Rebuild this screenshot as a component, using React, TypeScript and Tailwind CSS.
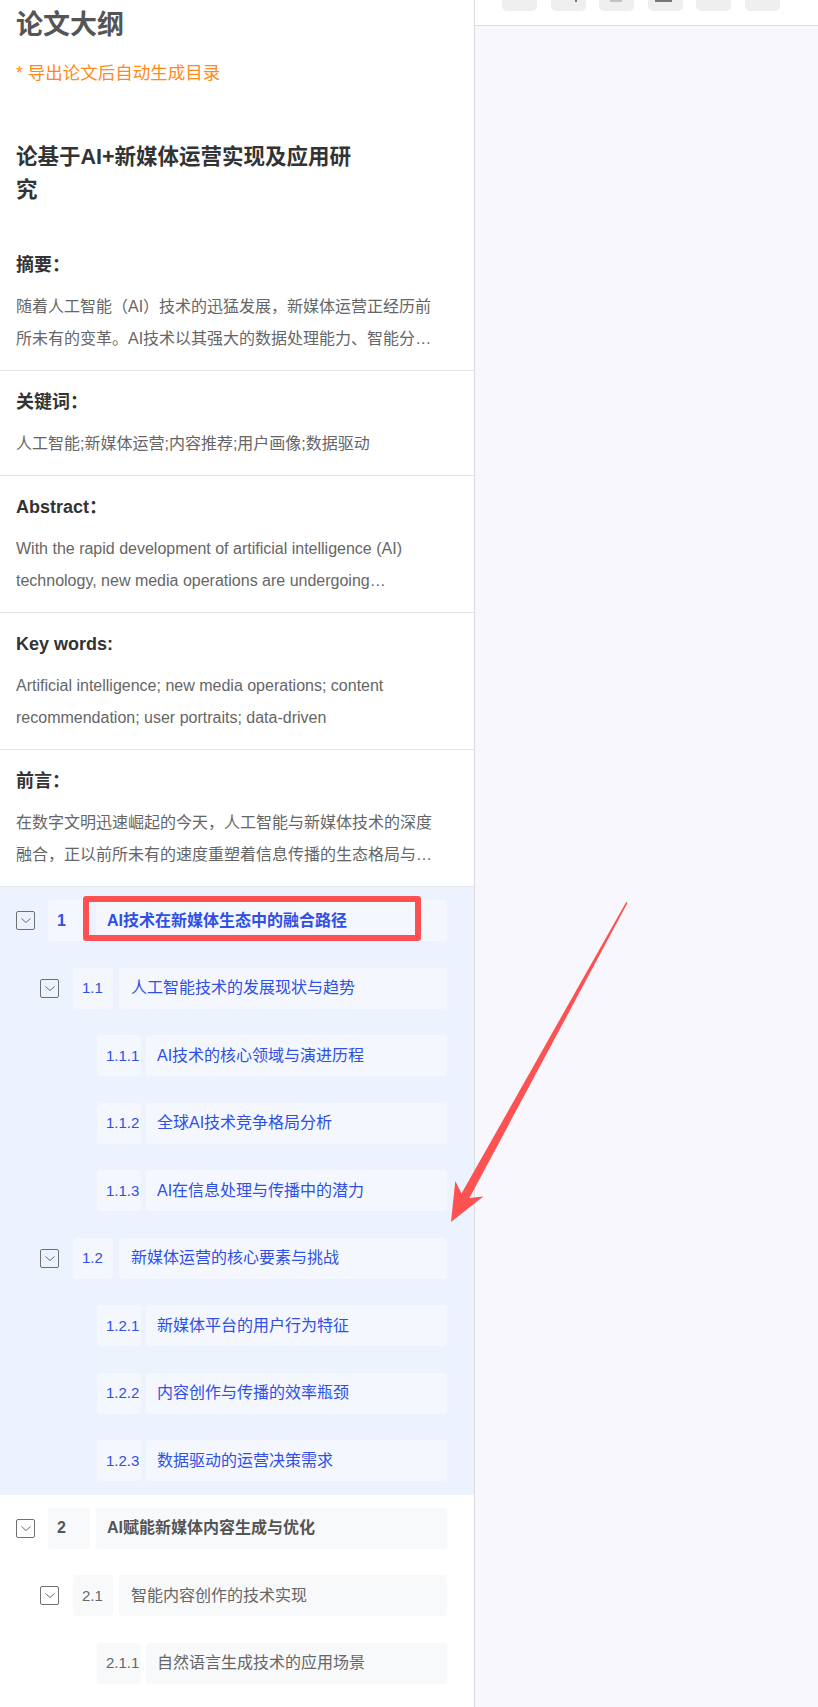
import React from 'react';

type OutlineItem = { num: string; title: string; level: 1 | 2 | 3 };

const sections = [
    {
        title: '摘要：',
        body: '随着人工智能（AI）技术的迅猛发展，新媒体运营正经历前所未有的变革。AI技术以其强大的数据处理能力、智能分析与精准推荐等优势，正在深刻重塑内容生产、传播与用户互动方式。',
        lines: 2,
    },
    {
        title: '关键词：',
        body: '人工智能;新媒体运营;内容推荐;用户画像;数据驱动',
        lines: 1,
    },
    {
        title: 'Abstract：',
        body: 'With the rapid development of artificial intelligence (AI) technology, new media operations are undergoing unprecedented changes. With its powerful data processing capabilities, AI is reshaping content production.',
        lines: 2,
    },
    {
        title: 'Key words:',
        body: 'Artificial intelligence; new media operations; content recommendation; user portraits; data-driven',
        lines: 2,
    },
    {
        title: '前言：',
        body: '在数字文明迅速崛起的今天，人工智能与新媒体技术的深度融合，正以前所未有的速度重塑着信息传播的生态格局与商业模式。',
        lines: 2,
    },
];

const chapterOne: OutlineItem[] = [
    { num: '1', title: 'AI技术在新媒体生态中的融合路径', level: 1 },
    { num: '1.1', title: '人工智能技术的发展现状与趋势', level: 2 },
    { num: '1.1.1', title: 'AI技术的核心领域与演进历程', level: 3 },
    { num: '1.1.2', title: '全球AI技术竞争格局分析', level: 3 },
    { num: '1.1.3', title: 'AI在信息处理与传播中的潜力', level: 3 },
    { num: '1.2', title: '新媒体运营的核心要素与挑战', level: 2 },
    { num: '1.2.1', title: '新媒体平台的用户行为特征', level: 3 },
    { num: '1.2.2', title: '内容创作与传播的效率瓶颈', level: 3 },
    { num: '1.2.3', title: '数据驱动的运营决策需求', level: 3 },
];

const chapterTwo: OutlineItem[] = [
    { num: '2', title: 'AI赋能新媒体内容生成与优化', level: 1 },
    { num: '2.1', title: '智能内容创作的技术实现', level: 2 },
    { num: '2.1.1', title: '自然语言生成技术的应用场景', level: 3 },
    { num: '2.1.2', title: 'AI辅助图像与视频内容生产', level: 3 },
];

function Chevron() {
    return (
        <span className="flex h-[19px] w-[19px] shrink-0 items-center justify-center rounded-[2px] border border-[#707070]">
            <svg width="10" height="5" viewBox="0 0 10 5">
                <path d="M0.5 0.5 L5 4.5 L9.5 0.5" fill="none" stroke="#6b6b6b" strokeWidth="1" />
            </svg>
        </span>
    );
}

function Row({ item, active }: { item: OutlineItem; active: boolean }) {
    const pad = item.level === 1 ? 'pl-[16px] gap-[13px]' : item.level === 2 ? 'pl-[40px] gap-[14px]' : 'pl-[64px] gap-[14px]';
    const numW = item.level === 1 ? 'w-[42px]' : item.level === 2 ? 'w-[40px]' : 'w-[44px]';
    const boxBg = active ? 'bg-[#f4f7fe]' : 'bg-[#f8f9fa]';
    const color = active ? 'text-[#2f4fe6]' : item.level === 1 ? 'text-[#555]' : 'text-[#666]';
    const bold = item.level === 1 ? 'font-bold' : '';

    return (
        <div className="py-[13.25px] pr-[27px]">
            <div className={`flex h-[41px] items-center ${pad}`}>
                {item.level === 3 ? <span className="w-[19px] shrink-0" /> : <Chevron />}
                <div className="flex h-full flex-1">
                    <span className={`flex h-full ${numW} shrink-0 items-center rounded-[4px] ${boxBg} pl-[9px] ${item.level === 1 ? 'text-[16px]' : 'text-[15px]'} ${color} ${bold}`}>
                        {item.num}
                    </span>
                    <span className={`flex h-full flex-1 items-center rounded-[4px] ${boxBg} ${item.level === 3 ? 'ml-[5px] pl-[11px]' : item.level === 2 ? 'ml-[6px] pl-[12px]' : 'ml-[6px] pl-[11px]'} text-[16px] ${color} ${bold}`}>
                        {item.title}
                    </span>
                </div>
            </div>
        </div>
    );
}

export default function App() {
    return (
        <div className="relative flex h-[1707px] w-[818px] overflow-hidden bg-white font-['Liberation_Sans','Noto_Sans_CJK_SC',sans-serif]">
            {/* LEFT: OUTLINE */}
            <aside className="w-[475px] shrink-0 border-r border-[#dcdcdc] bg-white">
                <div className="pl-4 pt-[7px]">
                    <h1 className="text-[27px] font-bold leading-[36px] text-[#555]">论文大纲</h1>
                    <p className="mt-[18px] text-[17.5px] leading-[24px] text-[#ff8a1c]">* 导出论文后自动生成目录</p>
                    <h2 className="mt-[56px] w-[345px] text-[21.5px] font-bold leading-[33px] text-[#333]">
                        论基于AI+新媒体运营实现及应用研究
                    </h2>
                </div>

                <div className="mt-[27px]">
                    {sections.map((s) => (
                        <section key={s.title} className="border-b border-[#e4e4ea] pb-[15px] pl-4 pr-[34px] pt-4">
                            <h3 className="text-[18px] font-bold leading-[30px] text-[#333]">{s.title}</h3>
                            <p className={`mt-[11px] text-[16px] leading-[32px] text-[#666] ${s.lines === 2 ? 'line-clamp-2' : 'line-clamp-1'}`}>
                                {s.body}
                            </p>
                        </section>
                    ))}
                </div>

                {/* TREE */}
                <div className="bg-[#edf3fe]">
                    {chapterOne.map((item) => (
                        <Row key={item.num} item={item} active />
                    ))}
                </div>
                <div className="bg-white">
                    {chapterTwo.map((item) => (
                        <Row key={item.num} item={item} active={false} />
                    ))}
                </div>
            </aside>

            {/* RIGHT: PREVIEW */}
            <main className="flex flex-1 flex-col bg-[#f7f7fd]">
                <div className="h-[26px] shrink-0 border-b border-[#dcdcdc] bg-white pl-[27px]">
                    <div className="flex gap-[13.5px]">
                        <div className="h-[11px] w-[35px] rounded-b-[5px] bg-[#efefef]" />
                        <div className="h-[11px] w-[35px] rounded-b-[5px] bg-[#efefef]">
                            <div className="ml-[24px] h-[2px] w-[2px] bg-[#777]" />
                        </div>
                        <div className="h-[11px] w-[35px] rounded-b-[5px] bg-[#efefef]">
                            <div className="ml-[11px] h-[2px] w-[12px] bg-[#c2c2c2]" />
                        </div>
                        <div className="h-[11px] w-[35px] rounded-b-[5px] bg-[#efefef]">
                            <div className="ml-[7px] h-[1.5px] w-[17px] bg-[#777]" />
                        </div>
                        <div className="h-[11px] w-[35px] rounded-b-[5px] bg-[#efefef]" />
                        <div className="h-[11px] w-[35px] rounded-b-[5px] bg-[#efefef]" />
                    </div>
                </div>
            </main>

            {/* ANNOTATIONS */}
            <div className="pointer-events-none absolute left-[83px] top-[896px] h-[45px] w-[338px] rounded-[3px] border-[6px] border-[#fe5151]" />
            <svg className="pointer-events-none absolute left-0 top-0" width="818" height="1707" viewBox="0 0 818 1707">
                <polygon
                    points="626.2,901.9 461.5,1193.6 455.3,1181 451,1222 483.3,1196.4 469.4,1197.9 627.6,902.7"
                    fill="#fe5151"
                />
            </svg>
        </div>
    );
}
